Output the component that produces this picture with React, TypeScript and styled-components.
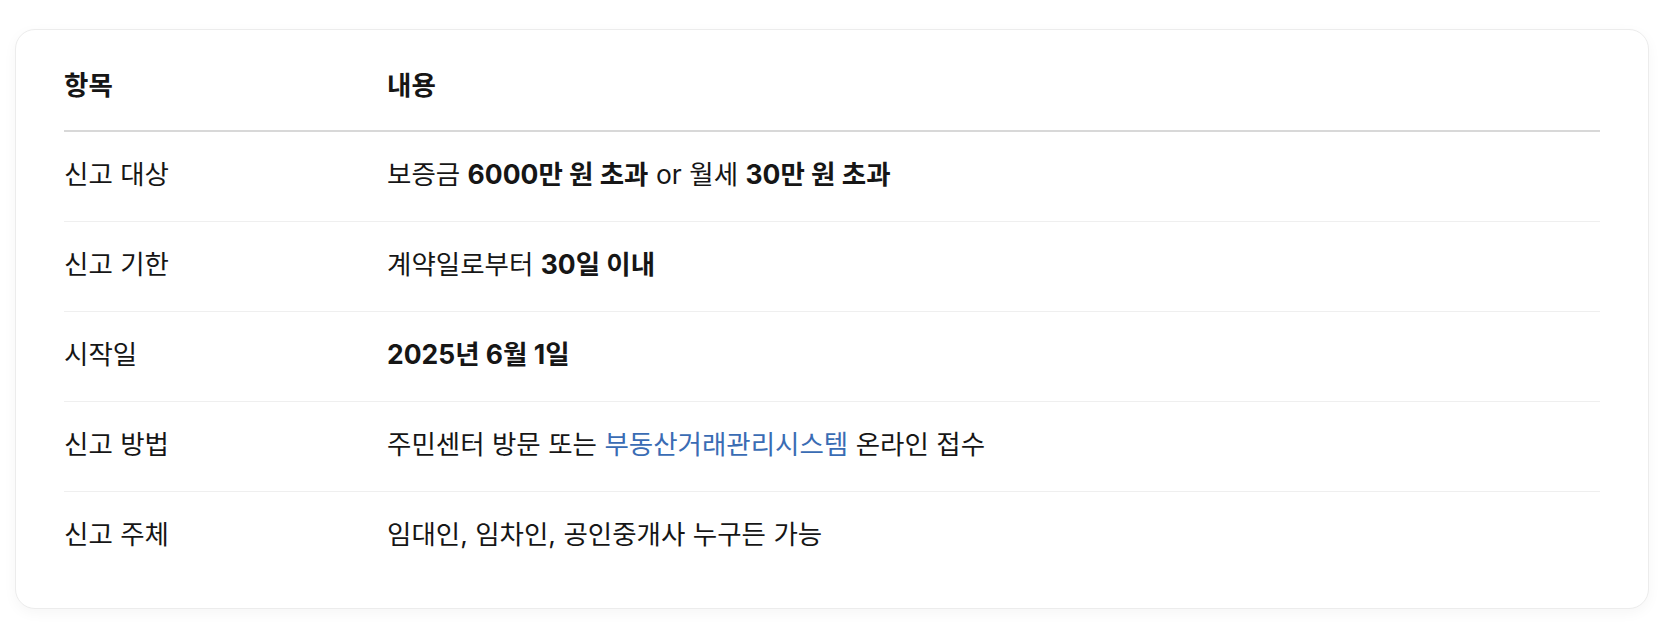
import React from "react";
import styled, {createGlobalStyle} from "styled-components";

const GlobalStyle = createGlobalStyle`
  html, body {
    margin: 0;
    padding: 0;
    background: #ffffff;
  }
  body {
    font-family: Inter, "Noto Sans CJK KR", sans-serif;
    color: #161616;
  }
`;

const Page = styled.div`
  padding: 29px 24px 20px 15px;
`;

const Card = styled.div`
  width: 1634px;
  box-sizing: border-box;
  background: #fff;
  border: 1px solid #ececec;
  border-radius: 20px;
  box-shadow: 0 4px 14px rgba(0, 0, 0, 0.04);
  padding: 11px 48px 27px 48px;
`;

const Table = styled.table`
  width: 100%;
  border-collapse: collapse;
  table-layout: fixed;
`;

const Th = styled.th<{ $width?: number }>`
  text-align: left;
  font-size: 26.5px;
  font-weight: 700;
  height: 90px;
  box-sizing: border-box;
  padding: 0 0 4px 0;
  border-bottom: 2px solid #d8d8d8;
  width: ${(p) => (p.$width ? `${p.$width}px` : "auto")};
`;

const Tr = styled.tr`
  &:not(:last-child) td {
    border-bottom: 1px solid #efefef;
  }
`;

const Td = styled.td`
  font-size: 26.5px;
  font-weight: 400;
  height: 90px;
  box-sizing: border-box;
  padding: 0 0 8px 0;
  vertical-align: middle;
`;

const Strong = styled.b`
  font-weight: 700;
`;

const Link = styled.span`
  color: #3a6cb4;
`;

interface Row {
  label: string;
  content: React.ReactNode;
}

const rows: Row[] = [
  {
    label: "신고 대상",
    content: (
      <>
        보증금 <Strong>6000만 원 초과</Strong> or 월세 <Strong>30만 원 초과</Strong>
      </>
    ),
  },
  {
    label: "신고 기한",
    content: (
      <>
        계약일로부터 <Strong>30일 이내</Strong>
      </>
    ),
  },
  {
    label: "시작일",
    content: <Strong>2025년 6월 1일</Strong>,
  },
  {
    label: "신고 방법",
    content: (
      <>
        주민센터 방문 또는 <Link>부동산거래관리시스템</Link> 온라인 접수
      </>
    ),
  },
  {
    label: "신고 주체",
    content: "임대인, 임차인, 공인중개사 누구든 가능",
  },
];

const App: React.FC = () => {
  return (
    <>
      <GlobalStyle />
      <Page>
        <Card>
          <Table>
            <thead>
              <tr>
                <Th $width={323}>항목</Th>
                <Th>내용</Th>
              </tr>
            </thead>
            <tbody>
              {rows.map((row) => (
                <Tr key={row.label}>
                  <Td>{row.label}</Td>
                  <Td>{row.content}</Td>
                </Tr>
              ))}
            </tbody>
          </Table>
        </Card>
      </Page>
    </>
  );
};

export default App;
